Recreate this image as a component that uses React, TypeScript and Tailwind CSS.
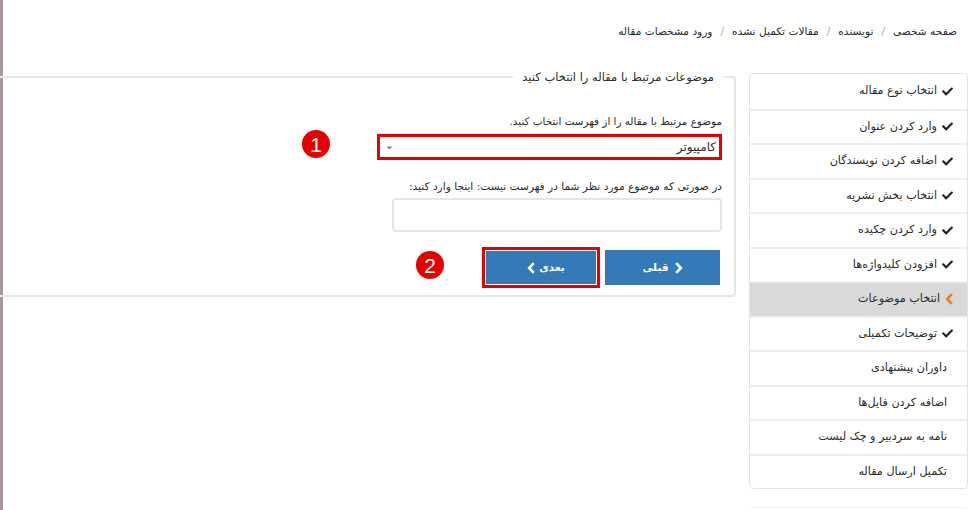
import { FaCheck, FaCaretDown } from 'react-icons/fa';

const steps = [
  { label: 'انتخاب نوع مقاله', state: 'done' },
  { label: 'وارد کردن عنوان', state: 'done' },
  { label: 'اضافه کردن نویسندگان', state: 'done' },
  { label: 'انتخاب بخش نشریه', state: 'done' },
  { label: 'وارد کردن چکیده', state: 'done' },
  { label: 'افزودن کلیدواژه‌ها', state: 'done' },
  { label: 'انتخاب موضوعات', state: 'active' },
  { label: 'توضیحات تکمیلی', state: 'done' },
  { label: 'داوران پیشنهادی', state: 'todo' },
  { label: 'اضافه کردن فایل‌ها', state: 'todo' },
  { label: 'نامه به سردبیر و چک لیست', state: 'todo' },
  { label: 'تکمیل ارسال مقاله', state: 'todo' },
];

const crumbs = ['صفحه شخصی', 'نویسنده', 'مقالات تکمیل نشده', 'ورود مشخصات مقاله'];

function Chevron({ dir, className }: { dir: 'left' | 'right'; className: string }) {
  return (
    <svg viewBox="0 0 9 12" className={className} fill="none" stroke="currentColor" strokeWidth="2.6">
      <polyline points={dir === 'left' ? '6.8,1.2 2.2,6 6.8,10.8' : '2.2,1.2 6.8,6 2.2,10.8'} />
    </svg>
  );
}

function Badge({ n, className }: { n: number; className: string }) {
  return (
    <span
      className={`absolute flex h-7 w-7 items-center justify-center rounded-full bg-[#e60000] text-[21px] leading-none text-white font-['Liberation_Sans',sans-serif] ${className}`}
    >
      {n}
    </span>
  );
}

export default function App() {
  return (
    <div className="flex h-[510px] w-[975px] overflow-hidden bg-white font-['DejaVu_Sans',sans-serif] text-[10.4px] text-[#2b2b2b]" dir="ltr">
      <div className="h-full w-[3px] shrink-0 bg-[#a89a9a]" />
      <div className="flex min-w-0 flex-1 flex-col" dir="rtl">
        <div className="flex h-[73px] shrink-0 items-start gap-[8px] pr-[18px] pt-[24px] text-[10.6px] leading-[14px]">
          {crumbs.map((c, i) => (
            <div key={c} className="flex items-center gap-[8px]">
              {i > 0 && <span className="text-[#aaa]">/</span>}
              <span>{c}</span>
            </div>
          ))}
        </div>

        <div className="flex shrink-0 items-start">
          <div className="mr-[7px] w-[219px] shrink-0">
            <div className="overflow-hidden rounded-[4px] border border-[#e4e4e4] text-[11.2px]">
              {steps.map((s, i) => (
                <div
                  key={s.label}
                  className={`flex h-[34.5px] items-center ${i > 0 ? 'border-t-2 border-[#eeeeee]' : ''} ${
                    s.state === 'active' ? 'gap-[5px] bg-[#d9d9d9] pr-[13px]' : s.state === 'done' ? 'gap-[5px] pr-[14px]' : 'pr-[20px]'
                  }`}
                >
                  {s.state === 'done' && <FaCheck className="h-[11px] w-[11px] shrink-0 text-[#222]" />}
                  {s.state === 'active' && <Chevron dir="left" className="h-[12px] w-[9px] shrink-0 text-[#f57c14]" />}
                  <span className="whitespace-nowrap leading-[14px]">{s.label}</span>
                </div>
              ))}
            </div>
            <div className="mt-[18px] h-[4px] rounded-t-[4px] border-t border-[#f4f4f4]" />
          </div>

          <div className="relative mr-[13px] mt-[-3px] h-[227px] w-[736px] shrink-0">
            <fieldset className="h-full rounded-tr-[4px] rounded-br-[4px] border-2 border-l-0 border-[#e6e6e6] pr-[12px] pl-[12px]">
              <legend className="mr-[-1px] px-[9px] text-[11.5px] leading-[14px]">موضوعات مرتبط با مقاله را انتخاب کنید</legend>
              <div className="flex flex-col items-start">
                <p className="mt-[30px] leading-[14px]">موضوع مرتبط با مقاله را از فهرست انتخاب کنید.</p>
                <div className="mt-[6px] flex h-[26px] w-[345px] items-center justify-between border-[3px] border-[#e60000] bg-white pl-[5px] pr-[3px] text-[12px]">
                  <span className="leading-none">کامپیوتر</span>
                  <FaCaretDown className="h-[9px] w-[9px] text-[#888]" />
                </div>
                <p className="mt-[19px] text-[10.6px] leading-[14px]">در صورتی که موضوع مورد نظر شما در فهرست نیست: اینجا وارد کنید:</p>
                <input className="mt-[5px] h-[34px] w-[330px] rounded-[4px] border-2 border-[#e6e6e6] bg-white" />
                <div className="mt-[15px] flex items-center gap-[5px] pr-[2px]">
                  <button className="flex h-[35px] w-[115px] items-center justify-center gap-[5px] bg-[#337ab7] text-[10.5px] font-bold text-white">
                    <Chevron dir="right" className="h-[12px] w-[9px]" />
                    <span>قبلی</span>
                  </button>
                  <div className="border-[3px] border-[#e60000] p-[1px]">
                    <button className="flex h-[33px] w-[110px] items-center justify-center gap-[3px] bg-[#337ab7] pl-[10px] text-[10.5px] font-bold text-white">
                      <span>بعدی</span>
                      <Chevron dir="left" className="h-[12px] w-[9px]" />
                    </button>
                  </div>
                </div>
              </div>
            </fieldset>
            <Badge n={1} className="left-[302px] top-[60px]" />
            <Badge n={2} className="left-[416px] top-[181px]" />
          </div>
        </div>
      </div>
    </div>
  );
}
